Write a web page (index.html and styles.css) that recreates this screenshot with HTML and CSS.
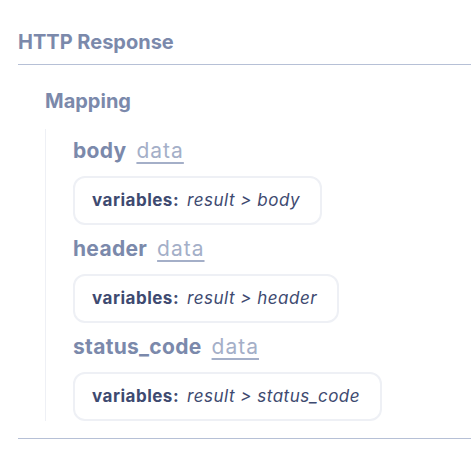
FILE: index.html
```html
<!DOCTYPE html>
<html lang="en">
<head>
  <meta charset="UTF-8">
  <meta name="viewport" content="width=device-width, initial-scale=1.0">
  <title>HTTP Response</title>
  <link rel="stylesheet" href="styles.css">
</head>
<body>
  <section class="response">
    <h2 class="response-title">HTTP Response</h2>

    <div class="response-content">
      <h3 class="mapping-title">Mapping</h3>

      <div class="mapping">
        <div class="mapping-item">
          <div class="mapping-label">
            <span class="mapping-name">body</span>
            <a href="#" class="mapping-link">data</a>
          </div>
          <div class="mapping-box">
            <b>variables:</b>
            <i>result &gt; body</i>
          </div>
        </div>

        <div class="mapping-item">
          <div class="mapping-label">
            <span class="mapping-name">header</span>
            <a href="#" class="mapping-link">data</a>
          </div>
          <div class="mapping-box">
            <b>variables:</b>
            <i>result &gt; header</i>
          </div>
        </div>

        <div class="mapping-item">
          <div class="mapping-label">
            <span class="mapping-name">status_code</span>
            <a href="#" class="mapping-link">data</a>
          </div>
          <div class="mapping-box">
            <b>variables:</b>
            <i>result &gt; status_code</i>
          </div>
        </div>
      </div>
    </div>
  </section>
</body>
</html>
```

FILE: styles.css
```css
body {
  margin: 0;
  background: #ffffff;
  font-family: Inter, "Noto Sans", sans-serif;
}

.response {
  padding: 30px 0 0 18px;
}

.response-title {
  margin: 0;
  color: #7b89ab;
  font-size: 20px;
  font-weight: 700;
  line-height: 24px;
  padding-bottom: 10px;
}

.response-content {
  border-top: 1px solid #b6c0d6;
  border-bottom: 1px solid #b6c0d6;
  padding: 24px 0 17px 27px;
}

.mapping-title {
  margin: 0 0 16px;
  color: #7b89ab;
  font-size: 20px;
  font-weight: 700;
  line-height: 24px;
}

.mapping {
  border-left: 1px solid #eef0f5;
  padding-left: 27px;
  display: flex;
  flex-direction: column;
  gap: 12px;
}

.mapping-item {
  display: flex;
  flex-direction: column;
  align-items: flex-start;
  gap: 13px;
}

.mapping-item:first-child {
  padding-top: 10px;
}

.mapping-label {
  display: flex;
  align-items: baseline;
  gap: 10px;
  line-height: 24px;
}

.mapping-name {
  color: #7b89ab;
  font-size: 21px;
  font-weight: 700;
  letter-spacing: 0.3px;
}

.mapping-link {
  color: #a4afc8;
  font-size: 21px;
  letter-spacing: 1px;
  text-decoration: underline;
  text-underline-offset: 4px;
  text-decoration-thickness: 2px;
}

.mapping-box {
  border: 2px solid #eef0f5;
  border-radius: 12px;
  padding: 12px 20px 12px 17px;
  font-size: 17px;
  line-height: 21px;
  letter-spacing: 0.5px;
  color: #3e4a70;
  display: flex;
  gap: 8px;
}

.mapping-box b {
  font-weight: 700;
}
```
